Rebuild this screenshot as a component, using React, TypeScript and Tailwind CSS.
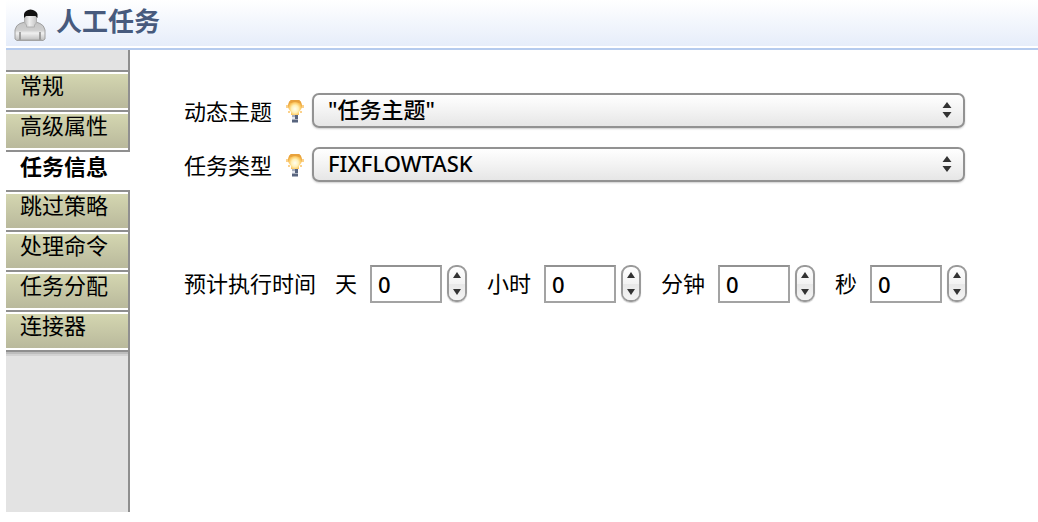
import { useState } from "react";

const TABS = ["常规", "高级属性", "任务信息", "跳过策略", "处理命令", "任务分配", "连接器"];

function UserIcon() {
  return (
    <svg className="h-8 w-8 shrink-0" viewBox="0 0 32 32" aria-hidden="true">
      <defs>
        <linearGradient id="coat" x1="0" y1="0" x2="0" y2="1">
          <stop offset="0" stopColor="#c4c4c4" />
          <stop offset="0.45" stopColor="#cfcfcf" />
          <stop offset="0.6" stopColor="#f0f0f0" />
          <stop offset="1" stopColor="#bcbcbc" />
        </linearGradient>
        <linearGradient id="face" x1="0" y1="0" x2="1" y2="0">
          <stop offset="0" stopColor="#bababa" />
          <stop offset="0.4" stopColor="#efefef" />
          <stop offset="1" stopColor="#c4c4c4" />
        </linearGradient>
      </defs>
      <path d="M1 30V21Q2 16 6 14.500L11 13H22L26 14.500Q30 16 31 21V30L29 31.500H3Z" fill="url(#coat)" stroke="#a0a0a0" />
      <path d="M6 23V31M26 23V31" stroke="#8c8c8c" strokeWidth="1.500" />
      <path d="M4 31H28" stroke="#a5a5a5" />
      <path d="M10.500 6H22.500V13Q22 15 20.500 16V18H12.500V16Q11 15 10.500 13Z" fill="url(#face)" stroke="#b0b0b0" />
      <path d="M10 9V5Q11 1 16.500 0.500Q22 1 23.500 5V9L21.500 7H12Z" fill="#111" />
    </svg>
  );
}

function BulbIcon() {
  return (
    <svg className="h-6 w-[18px] shrink-0" viewBox="0 0 18 24" aria-hidden="true">
      <defs>
        <radialGradient id="glow" cx="0.5" cy="0.6" r="0.55">
          <stop offset="0" stopColor="#fffef0" />
          <stop offset="0.45" stopColor="#fff1b8" />
          <stop offset="0.75" stopColor="#fdcc68" />
          <stop offset="1" stopColor="#eba53a" />
        </radialGradient>
      </defs>
      <path d="M0 6H3V9H0ZM15 6H18V9H15ZM2 12H4V14H2ZM14 12H16V14H14Z" fill="#fbd18c" />
      <path d="M5 1H13Q16 3 16 7Q16 10 13 13V16H5V13Q2 10 2 7Q2 3 5 1Z" fill="url(#glow)" />
      <path d="M5 1H13L15 3L13 4Q9 2 5 4L3 3Z" fill="#e8a23c" />
      <path d="M6 16H12V24H6Z" fill="#a9b0be" />
      <path d="M9 16H12V20H9ZM6 21H12V23H6Z" fill="#58647e" />
      <path d="M6 18H9V20H6Z" fill="#e3e6ee" />
    </svg>
  );
}

function Combo({ id, label, value }: { id: string; label: string; value: string }) {
  return (
    <div className="flex items-center">
      <label htmlFor={id} className="w-[102px] shrink-0 leading-8">
        {label}
      </label>
      <BulbIcon />
      <div className="relative ml-2 min-w-0 flex-1">
        <select
          id={id}
          className="block h-[35px] w-full appearance-none rounded-[7px] border-2 border-[#929292] bg-linear-to-b from-white from-0% via-[#f3f3f3] via-50% to-[#e6e6e6] pr-10 pb-1 pl-[14px] leading-7 font-medium shadow-[0_1px_2px_rgba(0,0,0,0.2)]"
        >
          <option>{value}</option>
        </select>
        <svg className="pointer-events-none absolute top-[9px] right-[13px] h-4 w-[10px]" viewBox="0 0 10 16" aria-hidden="true">
          <path d="M0.500 6L5 0L9.500 6ZM0.500 10H9.500L5 16Z" fill="#333" />
        </svg>
      </div>
    </div>
  );
}

function Duration({ id, label }: { id: string; label: string }) {
  const [value, setValue] = useState(0);
  return (
    <div className="flex items-center">
      <label htmlFor={id} className="mr-[13px] pb-0.5">
        {label}
      </label>
      <input
        id={id}
        inputMode="numeric"
        value={value}
        onChange={(e) => setValue(Number(e.target.value) || 0)}
        className="mr-[5px] h-[38px] w-[72px] border-2 border-[#a3a3a3] border-t-[#929292] bg-white pl-1.5 font-medium outline-none"
      />
      <div className="mb-px flex h-[37px] w-5 flex-col overflow-hidden rounded-[9px] border-2 border-[#9a9a9a] bg-linear-to-b from-white via-[#f3f3f3] to-[#f0f0f0] shadow-[0_1px_1px_rgba(0,0,0,0.2)]">
        <button type="button" aria-label={`${label} +`} onClick={() => setValue(value + 1)} className="flex flex-1 items-center justify-center">
          <svg className="h-1.5 w-2" viewBox="0 0 8 6" aria-hidden="true">
            <path d="M0 6L4 0L8 6Z" fill="#333" />
          </svg>
        </button>
        <button type="button" aria-label={`${label} -`} onClick={() => setValue(Math.max(0, value - 1))} className="flex flex-1 items-center justify-center bg-linear-to-b from-[#e8e8e8] to-[#f4f4f4]">
          <svg className="h-1.5 w-2" viewBox="0 0 8 6" aria-hidden="true">
            <path d="M0 0H8L4 6Z" fill="#333" />
          </svg>
        </button>
      </div>
    </div>
  );
}

export default function App() {
  const [active, setActive] = useState(2);
  return (
    <div className="flex min-h-screen flex-col bg-white pb-[10px] pl-1.5 font-['Noto_Sans','Noto_Sans_CJK_SC',sans-serif] text-[22px] leading-8 text-black">
      <header className="border-b-2 border-[#b5cbee] pb-0.5">
        <div className="flex h-[46px] items-center gap-[10px] bg-linear-to-b from-white to-[#e6edfa] pl-2">
          <div className="pt-1">
            <UserIcon />
          </div>
          <h1 className="pb-1 text-[26px] font-bold text-[#475a7d]">人工任务</h1>
        </div>
      </header>
      <div className="flex flex-1">
        <nav className="flex w-[124px] shrink-0 flex-col">
          <div className="h-[22px] border-r-2 border-b-2 border-[#8f8f8f] bg-[#e3e3e3]" />
          {TABS.map((tab, i) => (
            <button
              key={tab}
              type="button"
              onClick={() => setActive(i)}
              className={
                i === active
                  ? "h-10 border-b-2 border-[#8f8f8f] bg-white pb-2.5 pl-[14px] text-left leading-6 font-bold"
                  : "h-10 border-r-2 border-b-2 border-[#8f8f8f] bg-white py-0.5 text-left leading-[22px]"
              }
            >
              {i === active ? tab : <span className="block h-[34px] bg-linear-to-b from-[#d4d6b0] to-[#b9b99c] pl-[14px]">{tab}</span>}
            </button>
          ))}
          <div className="flex-1 border-r-2 border-[#8f8f8f] bg-[#e3e3e3]">
            <div className="h-0.5 bg-[#bdbdbd]" />
            <div className="h-0.5 bg-[#d2d2d2]" />
          </div>
        </nav>
        <main className="min-w-0 flex-1 pt-[43px] pr-[73px] pl-[54px]">
          <div className="flex flex-col gap-[19px]">
            <Combo id="subject" label="动态主题" value={'"任务主题"'} />
            <Combo id="type" label="任务类型" value="FIXFLOWTASK" />
          </div>
          <div className="mt-[83px] flex items-center whitespace-nowrap">
            <span className="mr-[19px] pb-0.5">预计执行时间</span>
            <div className="flex gap-5">
              <Duration id="days" label="天" />
              <Duration id="hours" label="小时" />
              <Duration id="minutes" label="分钟" />
              <Duration id="seconds" label="秒" />
            </div>
          </div>
        </main>
      </div>
    </div>
  );
}
